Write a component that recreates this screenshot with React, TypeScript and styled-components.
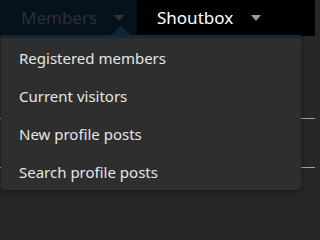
import React from "react";
import styled, { createGlobalStyle } from "styled-components";

const GlobalStyle = createGlobalStyle`
  html, body {
    margin: 0;
    padding: 0;
    background: #272727;
    font-family: "Noto Sans", "Open Sans", sans-serif;
  }
`;

const Page = styled.div`
  width: 315px;
  height: 202px;
  overflow: hidden;
  position: relative;
`;

const NavBar = styled.nav`
  display: flex;
  height: 36px;
  background: #000;
`;

const Tab = styled.div<{ $active?: boolean }>`
  position: relative;
  display: flex;
  align-items: center;
  width: ${(p) => (p.$active ? "137px" : "auto")};
  box-sizing: border-box;
  padding: 0 0 2px ${(p) => (p.$active ? "21px" : "20px")};
  gap: ${(p) => (p.$active ? "17px" : "18px")};
  background: ${(p) => (p.$active ? "#06121b" : "transparent")};
  color: ${(p) => (p.$active ? "#2a2f33" : "#fff")};
  font-size: 17px;
`;

const Arrow = styled.span<{ $active?: boolean }>`
  width: 0;
  height: 0;
  border-left: 5px solid transparent;
  border-right: 5px solid transparent;
  border-top: 6px solid ${(p) => (p.$active ? "#30353a" : "#9a9a9a")};
  margin-top: 2px;
`;

const Caret = styled.span`
  position: absolute;
  left: 110px;
  bottom: 0;
  width: 0;
  height: 0;
  border-left: 11px solid transparent;
  border-right: 11px solid transparent;
  border-bottom: 10px solid #12283a;
`;

const Content = styled.div`
  display: flex;
  flex-direction: column;
  padding-top: 82px;
`;

const Row = styled.div`
  height: 48px;
  border-top: 1px solid #a0a0a0;
`;

const Menu = styled.ul`
  position: absolute;
  top: 35px;
  left: 1px;
  width: 300px;
  margin: 0;
  padding: 1px 0 0;
  list-style: none;
  box-sizing: border-box;
  height: 155px;
  background: #2e2e2e;
  border-top: 3px solid #13293a;
  border-radius: 0 0 4px 4px;
  box-shadow: 0 2px 6px rgba(0, 0, 0, 0.35);
`;

const Item = styled.li`
  height: 38px;
  display: flex;
  align-items: center;
  padding-left: 18px;
  color: #e6e6e6;
  font-size: 15px;
`;

const items = [
  "Registered members",
  "Current visitors",
  "New profile posts",
  "Search profile posts",
];

export default function App() {
  return (
    <Page>
      <GlobalStyle />
      <NavBar>
        <Tab $active>
          Members
          <Arrow $active />
          <Caret />
        </Tab>
        <Tab>
          Shoutbox
          <Arrow />
        </Tab>
      </NavBar>
      <Content>
        <Row />
        <Row />
      </Content>
      <Menu>
        {items.map((label) => (
          <Item key={label}>{label}</Item>
        ))}
      </Menu>
    </Page>
  );
}
